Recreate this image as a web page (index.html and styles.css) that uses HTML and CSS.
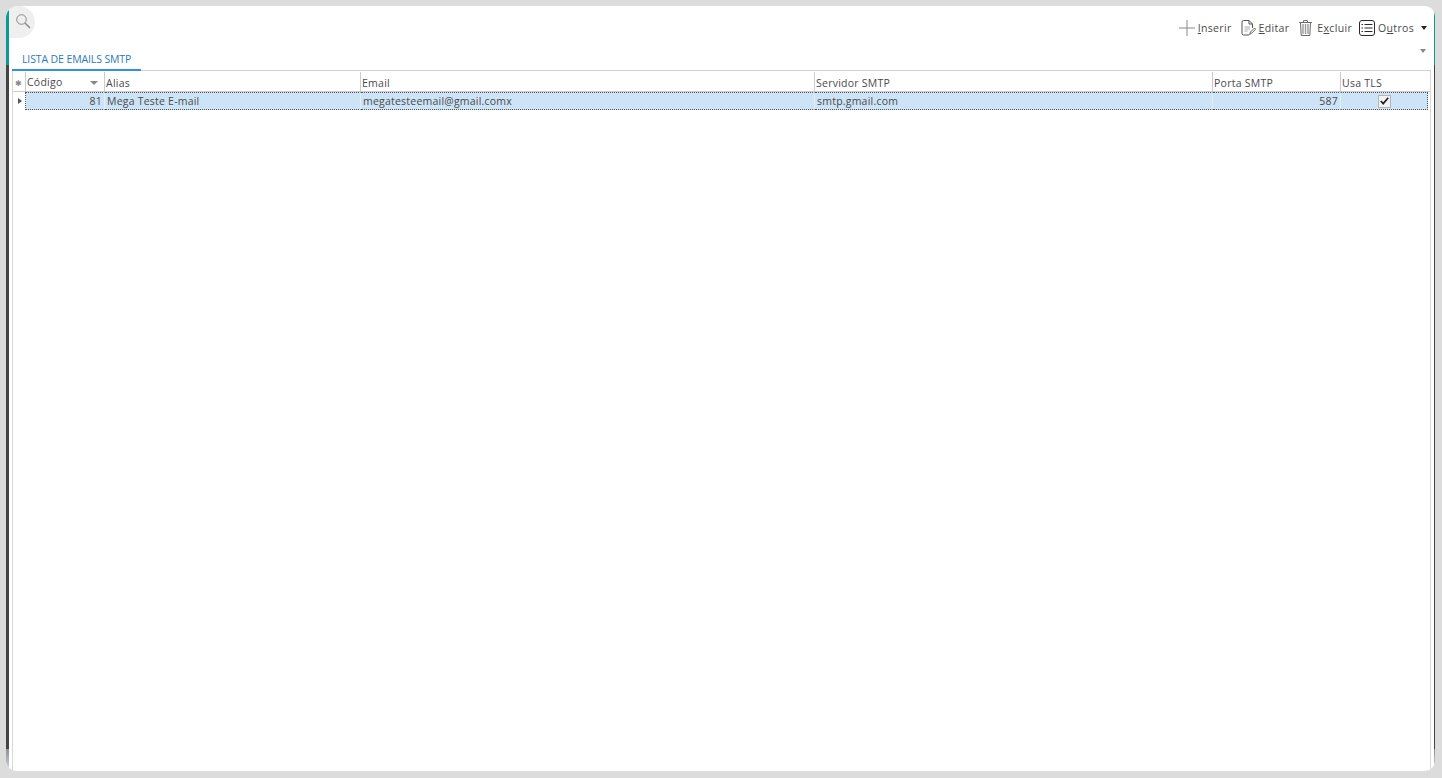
FILE: index.html
```html
<!DOCTYPE html>
<html lang="pt">
<head>
<meta charset="utf-8">
<title>Lista de Emails SMTP</title>
<link rel="stylesheet" href="styles.css">
</head>
<body>
<div class="window">
  <div class="content">
    <header class="topbar">
      <button class="search" aria-label="Pesquisar">
        <svg width="16" height="16" viewBox="0 0 16 16" fill="none" stroke="#8a8a8a" stroke-width="1"><circle cx="6.500" cy="6.500" r="4.800"/><path d="M10 10l5 5" stroke-width="1.500"/></svg>
      </button>
      <nav class="actions">
        <a class="action"><svg width="16" height="16" viewBox="0 0 16 16" stroke="#888" fill="none"><path d="M8 0v16M0 8h16"/></svg><span><u>I</u>nserir</span></a>
        <a class="action edit"><svg width="15" height="16" viewBox="0 0 15 16" fill="none" stroke="#555"><path d="M8 15H2.500a1.500 1.500 0 0 1-1.500-1.500V2A1.500 1.500 0 0 1 2.500 .5H8l3.500 3.500v4"/><path d="M8 .5V4h3.500"/><path d="M3.500 7h5.500M3.500 9h5.500M3.500 11h3" stroke="#aaa" stroke-width="1.200"/><path d="M8.500 14.500l1-2.500 4-4 1.200 1.200-4 4z" stroke="#666"/></svg><span><u>E</u>ditar</span></a>
        <a class="action trash"><svg width="13" height="16" viewBox="0 0 13 16" fill="none" stroke="#666"><path d="M0 2.500h13M4.500 2.500V.5h4v2" stroke="#777"/><path d="M1.500 2.500l.7 13h8.600l.7-13z"/><path d="M4 4v10M6.500 4v10M9 4v10" stroke="#999" stroke-width="1.400"/></svg><span>E<u>x</u>cluir</span></a>
        <a class="action others"><svg width="16" height="16" viewBox="0 0 16 16" fill="none" stroke="#2a2a2a"><rect x=".5" y=".5" width="15" height="15" rx="2.500"/><path d="M5.500 4.500h8M5.500 8h8M5.500 11.500h8M2.500 4.500h1.500M2.500 8h1.500M2.500 11.500h1.500"/></svg><span>O<u>u</u>tros</span><i class="caret dark"></i></a>
      </nav>
    </header>
    <div class="tabbar">
      <div class="tab">LISTA DE EMAILS SMTP</div>
      <i class="caret grey"></i>
    </div>
    <section class="grid">
      <div class="row head">
        <div class="cell ind star">✱</div>
        <div class="cell code">Código<i class="caret grey sort"></i></div>
        <div class="cell">Alias</div>
        <div class="cell">Email</div>
        <div class="cell">Servidor SMTP</div>
        <div class="cell">Porta SMTP</div>
        <div class="cell">Usa TLS</div>
      </div>
      <div class="row data">
        <div class="cell ind"><i class="pointer"></i></div>
        <div class="cell num">81</div>
        <div class="cell">Mega Teste E-mail</div>
        <div class="cell">megatesteemail@gmail.comx</div>
        <div class="cell">smtp.gmail.com</div>
        <div class="cell num">587</div>
        <div class="cell mid"><span class="check"><svg width="9" height="8" viewBox="0 0 9 8" fill="none" stroke="#222" stroke-width="1.700"><path d="M.8 4l2.400 2.600L8.200 .8"/></svg></span></div>
      </div>
    </section>
  </div>
</div>
</body>
</html>
```
FILE: styles.css
```css
* { box-sizing: border-box; }
html, body { height: 100%; margin: 0; }
body {
  background: #dcdcdc;
  padding: 6px 7px 7px 6px;
  font-family: "Open Sans", "Noto Sans", sans-serif;
  font-size: 10.5px;
  color: #4a4a4a;
  overflow: hidden;
}
.window {
  height: 100%;
  background: #fff;
  border-left: 3px solid #444;
  border-right: 1px solid #555;
  border-image: linear-gradient(to bottom, #0b9a92 0, #0b9a92 60px, #444 60px, #444 742px, #8a8f99 742px, #dcdcdc 100%) 1;
  border-top: 0;
  border-bottom: 0;
  overflow: hidden;
  clip-path: inset(0 round 12px 10px 10px 10px);
}
.content {
  height: 100%;
  padding: 0 3px 0 3px;
  display: flex;
  flex-direction: column;
}
.topbar {
  height: 40px;
  display: flex;
  justify-content: space-between;
  flex: none;
}
.search {
  width: 26px;
  height: 32px;
  margin: 0 0 0 -3px;
  padding: 7px 0 0 6px;
  border: 0;
  background: #efefef;
  border-radius: 0 16px 16px 0;
  display: flex;
  align-items: flex-start;
}
.search svg { display: block; }
.actions {
  display: flex;
  align-items: center;
  gap: 8px;
  padding: 4px 4px 0 0;
  height: 40px;
}
.action { display: flex; align-items: center; gap: 3px; color: #4a4a4a; font-size: 10.5px; letter-spacing: .33px; }
.action.edit { margin-left: 1px; }
.action.trash { gap: 5px; margin-left: 2px; }
.action.others { margin-left: -1px; }
.caret {
  display: block;
  width: 0; height: 0;
  border-left: 3.500px solid transparent;
  border-right: 3.500px solid transparent;
  border-top: 4px solid #222;
}
.caret.dark { margin-left: 4px; }
.caret.grey { border-top-color: #888; }
.caret.sort { border-left-width: 4.500px; border-right-width: 4.500px; margin-right: -1px; }
.tabbar {
  height: 25px;
  flex: none;
  display: flex;
  justify-content: space-between;
  border-bottom: 1px solid #d0d0d0;
}
.tab {
  width: 129px;
  padding: 6px 0 0 10px;
  margin-bottom: -1px;
  height: 25px;
  color: #2a7ab8;
  font-size: 10.5px;
  letter-spacing: -.12px;
  border-bottom: 2px solid #2f8fe0;
  white-space: nowrap;
}
.tabbar .caret { margin: 3px 5px 0 0; }
.grid {
  flex: 1;
  border-left: 1px solid #d8d8d8;
  border-right: 1px solid #d8d8d8;
  padding-top: 1px;
}
.row {
  display: grid;
  grid-template-columns: 13px 79px 256px 454px 398px 128px 87px;
}
.head { height: 20px; border-bottom: 1px solid #ccc; }
.head .cell { border-right: 1px solid #ccc; padding: 3px 1px 0; letter-spacing: .25px; }
.head .cell:last-child { border-right: 0; }
.cell { white-space: nowrap; overflow: hidden; line-height: 17px; }
.star { color: #888; padding: 2px 0 0 0 !important; font-size: 8px; text-align: center; }
.code { display: flex; justify-content: space-between; align-items: center; padding-left: 1px !important; padding-bottom: 1px !important; padding-right: 7px !important; }
.data { height: 18px; }
.data .cell {
  background: #cde4f6;
  padding: 0 2px;
  border-top: 1px dotted #555;
  border-bottom: 1px dotted #555;
  border-right: 1px solid #e4eef7;
  letter-spacing: .22px;
}
.data .cell:last-child { border-right: 1px dotted #555; }
.data .ind {
  background: #fff;
  border: 0;
  border-right: 1px dotted #555;
  display: flex;
  align-items: center;
  padding: 0 0 0 5px;
}
.num { text-align: right; }
.mid { display: flex; justify-content: center; align-items: center; padding-right: 1px !important; }
.pointer {
  width: 0; height: 0;
  border-top: 3px solid transparent;
  border-bottom: 3px solid transparent;
  border-left: 4px solid #555;
}
.check {
  width: 13px; height: 13px;
  background: #f2f2f2;
  border: 1px solid #b5b5b5;
  display: flex;
  align-items: center;
  justify-content: center;
}
```
